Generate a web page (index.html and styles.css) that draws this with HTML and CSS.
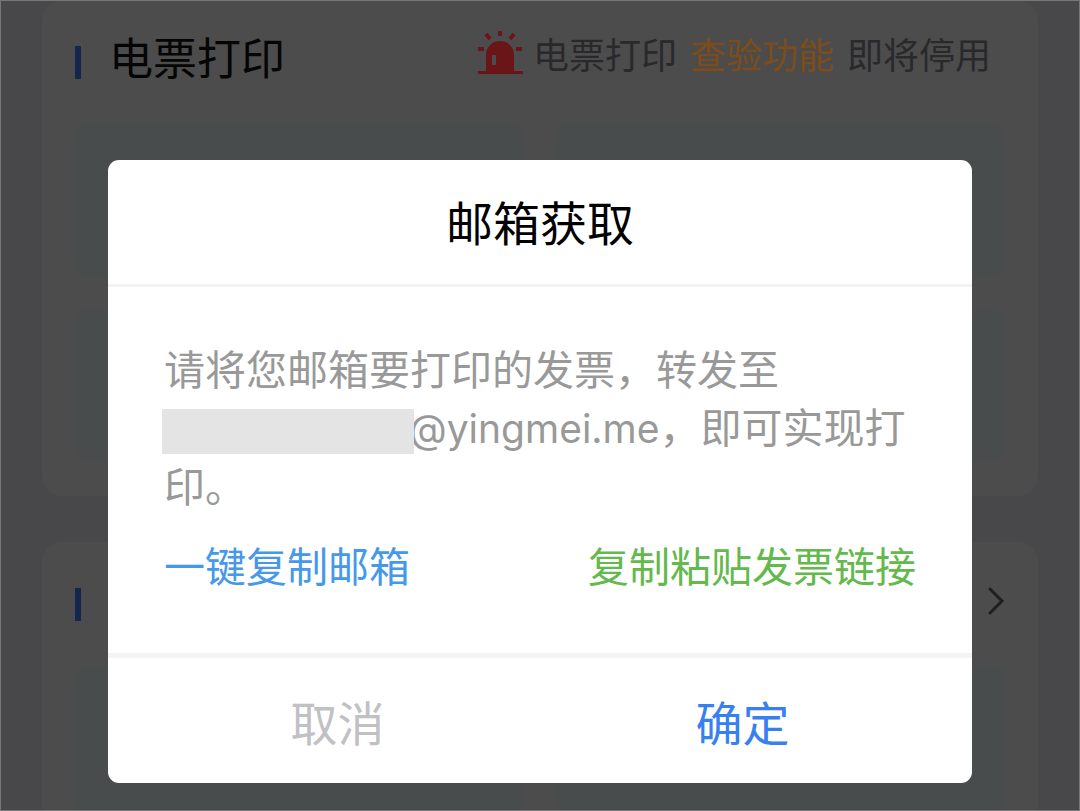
FILE: index.html
```html
<!DOCTYPE html>
<html lang="zh-CN">
<head>
    <meta charset="UTF-8">
    <meta name="viewport" content="width=device-width, initial-scale=1.0">
    <title>邮箱获取</title>
    <link rel="stylesheet" href="styles.css">
</head>
<body>
    <main class="page">
        <section class="card">
            <header class="card-header">
                <h2>电票打印</h2>
                <p class="notice">
                    <svg class="siren" viewBox="0 0 48 46" width="48" height="46" aria-hidden="true">
                        <path d="M10 41V25a14 14 0 0 1 28 0v16h9v3H2v-3zM16 25v10h4v-10z" fill-rule="evenodd"/>
                        <path d="M2 19h6M40 19h6M10 4l4 5M38 4l-4 5M24 1v5" fill="none" stroke-width="4"/>
                    </svg>
                    <span>电票打印</span>
                    <span class="highlight">查验功能</span>
                    <span>即将停用</span>
                </p>
            </header>
            <div class="tiles">
                <div class="tile"></div>
                <div class="tile"></div>
                <div class="tile"></div>
                <div class="tile"></div>
            </div>
        </section>
        <section class="card card-last">
            <header class="card-header">
                <h2></h2>
                <svg class="chevron" viewBox="0 0 18 30" width="18" height="30" aria-hidden="true">
                    <path d="M3 3l12 12L3 27"/>
                </svg>
            </header>
            <div class="tiles">
                <div class="tile"></div>
                <div class="tile"></div>
            </div>
        </section>
    </main>

    <div class="overlay">
        <div class="dialog" role="dialog" aria-labelledby="dialog-title">
            <h1 class="dialog-title" id="dialog-title">邮箱获取</h1>
            <div class="dialog-body">
                <p>请将您邮箱要打印的发票，转发至<br><span class="mask"></span><span class="mail">@yingmei.me</span>，即可实现打<br>印。</p>
                <div class="links">
                    <a class="copy-mail" href="#">一键复制邮箱</a>
                    <a class="copy-link" href="#">复制粘贴发票链接</a>
                </div>
            </div>
            <div class="dialog-footer">
                <button class="cancel" type="button">取消</button>
                <button class="confirm" type="button">确定</button>
            </div>
        </div>
    </div>
</body>
</html>
```
FILE: styles.css
```css
* {
    box-sizing: border-box;
}

body {
    margin: 0;
    background-color: #48484a;
    font-family: Inter, "Noto Sans CJK SC", sans-serif;
}

h1, h2, p {
    margin: 0;
    font-weight: 400;
}

/* dimmed page behind the dialog */
.page {
    display: flex;
    flex-direction: column;
    gap: 46px;
    height: 100vh;
    padding: 0 42px;
    overflow: hidden;
}

.card {
    flex-shrink: 0;
    padding: 0 33px 34px;
    border-radius: 20px;
    background-color: #4c4c4c;
}

.card-header {
    display: flex;
    justify-content: space-between;
    align-items: center;
    height: 124px;
    padding-bottom: 6px;
}

.card-header h2 {
    display: flex;
    align-items: center;
    gap: 28px;
    font-size: 44px;
    line-height: 54px;
    color: #050505;
}

.card-header h2::before {
    content: '';
    width: 6px;
    height: 33px;
    margin-top: 6px;
    background-color: #13264d;
}

.notice {
    display: flex;
    align-items: center;
    gap: 13px;
    padding: 0 14px 6px 0;
    font-size: 36px;
    line-height: 48px;
    color: #29292c;
}

.notice .highlight {
    color: #7c4d1a;
}

.siren {
    margin: 0 -4px 6px 0;
    fill: #6a1517;
    stroke: #6a1517;
}

.siren path:first-child {
    stroke: none;
}

.chevron {
    fill: none;
    stroke: #1f1f1f;
    stroke-width: 3;
    stroke-linecap: round;
}

.tiles {
    display: grid;
    grid-template-columns: 1fr 1fr;
    gap: 34px;
}

.tile {
    height: 152px;
    border-radius: 12px;
    background-color: #494c4d;
}

/* the last card runs to the bottom of the window */
.card-last {
    display: flex;
    flex: 1;
    flex-direction: column;
    padding-bottom: 0;
    border-radius: 20px 20px 0 0;
}

.card-last .tiles {
    flex: 1;
}

.card-last .tile {
    height: auto;
    border-radius: 12px 12px 0 0;
}

.overlay {
    position: fixed;
    inset: 0;
    box-shadow: inset 0 0 0 1px #777;
}

.dialog {
    width: 80%;
    margin: 160px auto 0;
    border-radius: 11px;
    background-color: #fff;
}

.dialog-title {
    padding: 32px 0 28px;
    border-bottom: 3px solid #f3f3f4;
    font-size: 47px;
    line-height: 64px;
    text-align: center;
    color: #000;
}

.dialog-body {
    padding: 54px 56px 57px;
    border-bottom: 5px solid #f3f4f4;
    font-size: 41px;
    line-height: 58px;
    color: #999;
}

.mail {
    font-size: 39px;
}

.mask {
    display: inline-block;
    position: relative;
    width: 252px;
    height: 45px;
    margin: 0 -5px 0 -2px;
    vertical-align: middle;
    background-color: #e4e4e4;
}

.links {
    display: flex;
    justify-content: space-between;
    margin-top: 22px;
}

.links a {
    text-decoration: none;
}

.copy-mail {
    color: #4698ea;
}

.copy-link {
    color: #63b94c;
}

.dialog-footer {
    display: grid;
    grid-template-columns: 1fr 1fr;
    padding: 0 27px;
}

.dialog-footer button {
    height: 125px;
    padding: 0;
    border: none;
    background: none;
    font-family: inherit;
    font-size: 47px;
    cursor: pointer;
}

.cancel {
    color: #c0c0c5;
}

.confirm {
    color: #3880f0;
}
```
